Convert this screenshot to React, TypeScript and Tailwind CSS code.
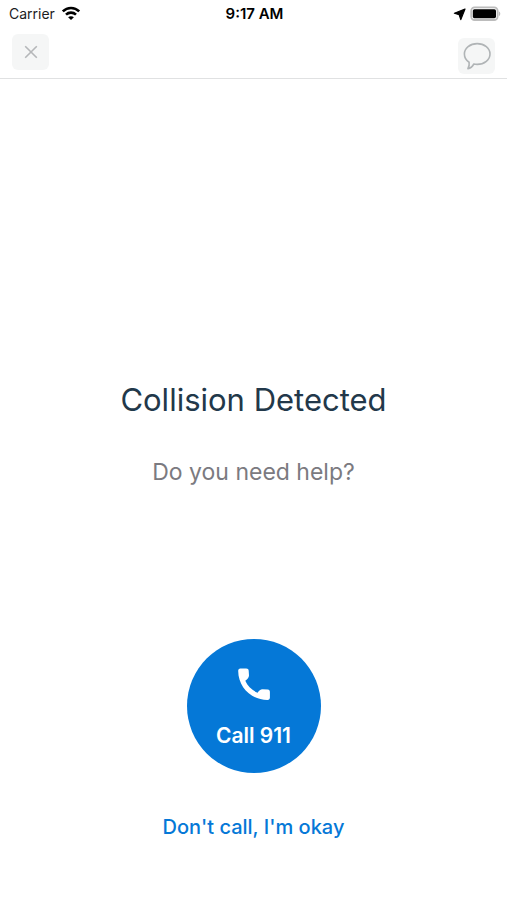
import React from 'react';

const StatusBar: React.FC = () => (
  <div className="grid grid-cols-3 items-center h-7 pl-2 pr-1.5 text-sm leading-5 text-[#1c1c1e]">
    <div className="flex items-center gap-1.5 pl-px">
      <span>Carrier</span>
      <svg width="20" height="16" viewBox="0 0 20 16" fill="none" stroke="#000" strokeWidth="2.6" aria-hidden="true">
        <path d="M1.8 5.4C6.4 0.8 13.6 0.8 18.2 5.4" />
        <path d="M5 8.6C7.8 5.9 12.2 5.9 15 8.6" />
        <path d="M10 14L7.1 11.2C8.7 9.8 11.3 9.8 12.9 11.2Z" fill="#000" stroke="none" />
      </svg>
    </div>
    <div className="text-center text-[15px] font-semibold text-black">9:17 AM</div>
    <div className="flex items-center justify-end gap-1">
      <svg width="13" height="13" viewBox="0 0 13 13" aria-hidden="true">
        <path d="M12 1L1.4 5.2L6.2 6.8L7.8 11.6Z" fill="#000" stroke="#000" strokeWidth="1.2" strokeLinejoin="round" />
      </svg>
      <svg width="31" height="16" viewBox="0 0 31 16" aria-hidden="true">
        <rect x="1.2" y="1.4" width="26.4" height="12.6" rx="3.4" fill="#fff" stroke="#bcbcbc" strokeWidth="1.8" />
        <rect x="2.8" y="3.2" width="23.2" height="9" rx="1.6" fill="#000" />
        <path d="M28.8 5.2C30.8 6.2 30.8 9.2 28.8 10.2Z" fill="#bcbcbc" />
      </svg>
    </div>
  </div>
);

const NavBar: React.FC = () => (
  <nav className="flex justify-between px-3 pt-1.5 pb-1 border-b border-[#e0e1e2]">
    <button type="button" aria-label="Close" className="w-[37px] h-9 rounded-md bg-[#f5f6f6] flex items-center justify-center">
      <svg width="14" height="14" viewBox="0 0 14 14" fill="none" stroke="#b5b7b9" strokeWidth="1.6" aria-hidden="true">
        <path d="M1.2 1.2L12.8 12.8M12.8 1.2L1.2 12.8" />
      </svg>
    </button>
    <button type="button" aria-label="Chat" className="w-[37px] h-9 mt-1 rounded-md bg-[#f5f6f6] flex items-center justify-center">
      <svg width="28" height="28" viewBox="0 0 28 28" fill="none" stroke="#b0b4b6" strokeWidth="1.6" strokeLinejoin="round" aria-hidden="true">
        <path d="M14.2 1.6C21.4 1.6 27 6.2 27 12S21.4 22.4 14.2 22.4C12.9 22.4 11.8 22.3 10.8 22C9.5 24.4 7.4 26.2 4.9 26.6C6.1 24.7 6.5 22.5 6.1 20.2C3.2 18.4 1.4 15.4 1.4 12C1.4 6.2 7 1.6 14.2 1.6Z" />
      </svg>
    </button>
  </nav>
);

const App: React.FC = () => {
  return (
    <div className="min-h-screen flex flex-col bg-white font-['Inter',sans-serif]">
      <StatusBar />
      <NavBar />

      <main className="flex-1 flex flex-col items-center pb-[59px]">
        {/* Message */}
        <div className="flex-1 flex flex-col items-center justify-end gap-9 pb-[151px] text-center">
          <h1 className="text-[31px] leading-10 text-[#22384a]">Collision Detected</h1>
          <p className="text-[23px] leading-8 text-[#7b7a80]">Do you need help?</p>
        </div>

        {/* Actions */}
        <button
          type="button"
          className="w-[134px] h-[134px] rounded-full bg-[#0578d7] text-white flex flex-col items-center justify-center gap-4"
        >
          <svg width="44" height="44" viewBox="0 0 44 44" fill="currentColor" aria-hidden="true">
            <path d="M8.4 6.4H14.2C15.8 6.4 16.6 7.2 16.7 8.8L17 13.6C17 15.4 15.6 17.2 13.3 18.8C15.6 24 20 28.4 25.6 30.8C27 28.6 28.6 27.2 30.4 27.2L35.8 27.6C37.2 27.8 37.9 28.6 37.9 30V35.6C37.9 37.2 37.1 37.9 35.6 37.9C19 38 6.3 25 6.2 9C6.2 7.2 6.8 6.4 8.4 6.4Z" />
          </svg>
          <span className="text-[21px] leading-7 font-semibold">Call 911</span>
        </button>
        <button type="button" className="mt-10 text-xl font-medium text-[#0578d7]">
          Don't call, I'm okay
        </button>
      </main>
    </div>
  );
};

export default App;
